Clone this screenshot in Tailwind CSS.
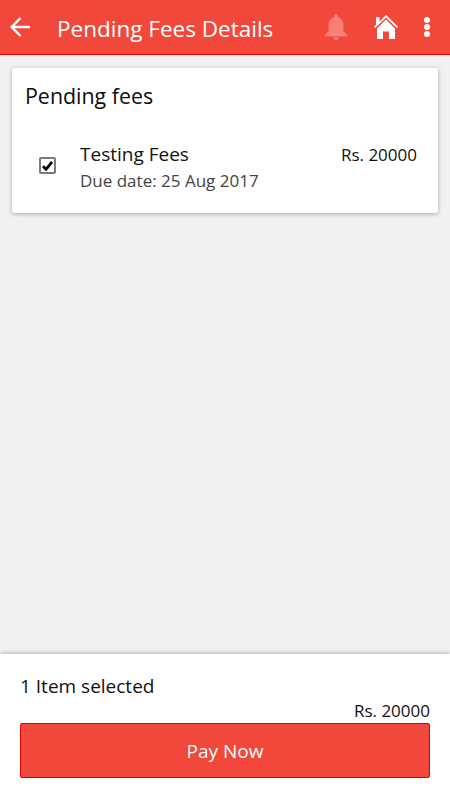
<!DOCTYPE html>
<html lang="en">
<head>
    <meta charset="UTF-8">
    <meta name="viewport" content="width=device-width, initial-scale=1.0">
    <title>Pending Fees Details</title>
    <script src="https://cdn.jsdelivr.net/npm/@tailwindcss/browser@4"></script>
</head>
<body class="bg-[#f1f1f1] font-['Open_Sans',sans-serif]">
    <div class="flex flex-col h-[800px] w-[450px] overflow-hidden">
        <!-- Header -->
        <header class="flex items-center h-[55px] bg-[#f2473b] border-b border-[#f50000] text-white shrink-0">
            <svg class="ml-[10px] w-[20px] h-[20px]" viewBox="0 0 20 20" fill="none" stroke="white" stroke-width="2.4">
                <path d="M20 10H2M10.500 1L1.700 10l8.800 9"/>
            </svg>
            <h1 class="ml-[27px] text-[22.500px] leading-[30px] flex-1 whitespace-nowrap pt-[3px]">Pending Fees Details</h1>
            <svg class="w-[22px] h-[26px] mr-[27px]" viewBox="0 0 22 26" fill="#fb7f75">
                <path d="M11 0c1.200 0 2 .8 2 2v1.200c3.500 1 5.500 4 5.500 8V17l3.500 4v1.500H0V21l3.500-4v-5.800c0-4.200 2-7.200 5.500-8V2c0-1.200.8-2 2-2zM8 23.500h6c-.5 1.700-1.500 2.500-3 2.500s-2.500-.8-3-2.500z"/>
            </svg>
            <svg class="w-[24px] h-[24px] mr-[26px]" viewBox="0 0 24 24" fill="white">
                <path d="M12 0l12 11.800-1.200 1.200L12 2.400 1.200 13 0 11.800l2-2V2h3.500v4.400z"/>
                <path d="M12 4.600l9 8.800V24h-6v-7.500H9V24H3V13.400z"/>
            </svg>
            <div class="flex flex-col gap-[1px] mr-[20px]">
                <span class="w-[6px] h-[6px] rounded-full bg-white"></span>
                <span class="w-[6px] h-[6px] rounded-full bg-white"></span>
                <span class="w-[6px] h-[6px] rounded-full bg-white"></span>
            </div>
        </header>

        <!-- Fees card -->
        <main class="flex-1 px-[12px] pt-[13px]">
            <section class="bg-white rounded-[2px] h-[145px] shadow-[0_1px_4px_rgba(0,0,0,0.3)]">
                <h2 class="pt-[13px] pl-[13px] text-[21.400px] leading-[30px] text-[#0c0c0c]">Pending fees</h2>
                <div class="flex mt-[31px]">
                    <div class="flex items-center justify-center ml-[27px] mt-[15px] w-[17px] h-[17px] border-2 border-[#7a7a7a] rounded-[2px] bg-white">
                        <svg class="w-[11px] h-[10px]" viewBox="0 0 11 10" fill="none" stroke="black" stroke-width="2.800">
                            <path d="M1 5.200L4 8.300 10 1"/>
                        </svg>
                    </div>
                    <div class="ml-[24px] flex-1">
                        <p class="text-[19px] leading-[24px] text-[#111]">Testing Fees</p>
                        <p class="mt-[3px] text-[17px] leading-[24px] text-[#444]">Due date: 25 Aug 2017</p>
                    </div>
                    <p class="mr-[21px] pt-[1px] text-[17px] leading-[24px] text-[#111]">Rs. 20000</p>
                </div>
            </section>
        </main>

        <!-- Pay bar -->
        <footer class="h-[146px] bg-white shrink-0 px-[20px] pt-[19px] shadow-[0_-1px_4px_rgba(0,0,0,0.25)]">
            <p class="text-[19px] leading-[26px] text-[#111]">1 Item selected</p>
            <p class="text-right text-[17px] leading-[24px] text-[#111]">Rs. 20000</p>
            <button class="block w-full h-[55px] pt-[2px] bg-[#f2473b] border border-[#e60000] rounded-[2px] text-white text-[19px]">Pay Now</button>
        </footer>
    </div>
</body>
</html>
